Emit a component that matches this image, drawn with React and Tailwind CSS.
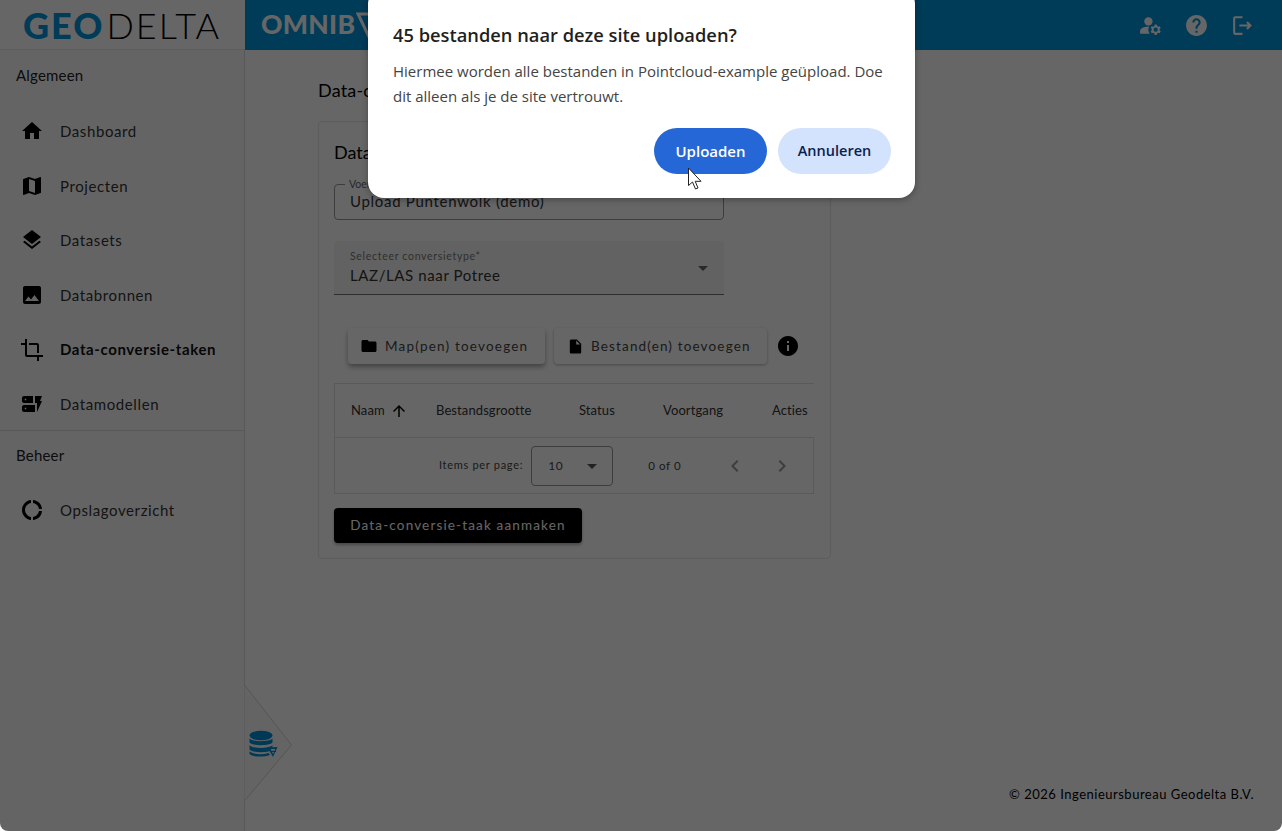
import React from "react";
import { MdHome, MdMap, MdLayers, MdImage, MdCrop, MdDynamicForm, MdDonutLarge, MdFolder, MdInsertDriveFile, MdInfo, MdArrowUpward, MdHelp, MdArrowDropDown, MdChevronLeft, MdChevronRight, MdManageAccounts, MdOutlineLogout } from "react-icons/md";

const nav = [
  ["Dashboard", MdHome],
  ["Projecten", MdMap],
  ["Datasets", MdLayers],
  ["Databronnen", MdImage],
  ["Data-conversie-taken", MdCrop, true],
  ["Datamodellen", MdDynamicForm],
];

function NavItem({ label, Icon, active }) {
  return (
    <div className="flex h-[54.6px] items-center pl-[20px]">
      <Icon className="w-[24px] h-[24px] text-black shrink-0" />
      <span className={`ml-[16px] text-[15px] tracking-[0.6px] ${active ? "font-bold text-[#111]" : "text-[#333]"}`}>{label}</span>
    </div>
  );
}

export default function App() {
  return (
    <div className="relative w-[1282px] h-[831px] overflow-hidden rounded-b-[8px] bg-white text-[#222] flex flex-col font-['Lato',sans-serif]">
      <header className="flex h-[50px] shrink-0">
        <div className="w-[245px] shrink-0 bg-white flex items-center pl-[23px] border-b border-[#e6e6e6] overflow-hidden">
          <span className="text-[36px] leading-none tracking-[2px] font-black text-[#0095dd]">GEO</span>
          <span className="ml-[2px] text-[36px] leading-none tracking-[2px] font-light text-black">DELTA</span>
        </div>
        <div className="flex-1 bg-[#0095dd] flex items-center pl-[16px] pr-[27px]">
          <span className="text-[26.5px] font-black tracking-[0.3px] text-white">OMNIB</span>
          <svg className="ml-[1px] mt-[-1px]" width="26" height="28" viewBox="0 0 26 28" fill="none">
            <path d="M2 3 H24 L13 26 Z" stroke="#fff" strokeWidth="3" strokeLinejoin="miter" />
          </svg>
          <div className="ml-auto flex items-center gap-[21px] text-white">
            <MdManageAccounts className="w-[25px] h-[25px]" />
            <MdHelp className="w-[25px] h-[25px]" />
            <MdOutlineLogout className="w-[25px] h-[25px]" />
          </div>
        </div>
      </header>

      <div className="flex flex-1 min-h-0">
        <aside className="relative w-[245px] shrink-0 bg-[#fbfbfb] border-r border-[#dcdcdc] flex flex-col">
          <div className="pl-[16px] pt-[14px] h-[54px] text-[15px] text-[#222] tracking-[0.2px]">Algemeen</div>
          {nav.map(([l, I, a]) => <NavItem key={l} label={l} Icon={I} active={a} />)}
          <div className="border-t border-[#dcdcdc] pl-[16px] pt-[13px] h-[53px] text-[15px] mt-[-2px] tracking-[0.2px]">Beheer</div>
          <NavItem label="Opslagoverzicht" Icon={MdDonutLarge} />
          <div className="absolute left-[244px] top-[635px] w-[50px] h-[118px]">
            <svg width="50" height="118" viewBox="0 0 50 118" fill="none">
              <path d="M0.5 0 L47.5 60 L0.5 116" stroke="#d4d4d4" strokeWidth="1" fill="#fbfbfb" />
            </svg>
          </div>
          <svg className="absolute left-[249px] top-[680px]" width="30" height="28" viewBox="0 0 30 28" fill="#008fd8">
            <ellipse cx="12" cy="5.5" rx="11.5" ry="4.8" />
            <path d="M0.5 8.5 C3 12 21 12 23.5 8.5 V12.5 C21 16 3 16 0.5 12.5 Z" />
            <path d="M0.5 15 C3 18.8 19 18.8 23.5 15.5 V17 L21 21 C15 23 3 22.5 0.5 19.5 Z" />
            <path d="M0.5 21.5 C5 24.5 13 25 19.5 23 L21 25 C14 27.5 3 27 0.5 24 Z" />
            <path d="M18.5 17.5 L28.5 17 L24 27 Z M21.3 19 L24.2 24 L26.3 19 Z" fillRule="evenodd" />
            <rect x="21" y="20.8" width="6" height="1.2" />
          </svg>
        </aside>

        <main className="flex-1 min-w-0 flex flex-col pl-[73px]">
          <h1 className="mt-[27px] h-[44px] text-[18px] text-black tracking-[0.2px] font-normal">Data-conversie-taken</h1>
          <section className="w-[513px] h-[438px] bg-white border border-[#e6e6e6] rounded-[4px] px-[15px] pt-[18px] shrink-0">
            <h2 className="text-[18px] leading-[24px] text-black">Data-conversie-taak</h2>

            <div className="relative mt-[20px] w-[390px] h-[36px] border border-[#9a9a9a] rounded-[4px] pl-[15px] flex items-end pb-[9px]">
              <span className="absolute left-[10px] top-[-6px] bg-white px-[4px] text-[10.5px] leading-none text-[#666]">Voer een naam in*</span>
              <span className="text-[15px] leading-[18px] tracking-[0.7px] text-[#333]">Upload Puntenwolk (demo)</span>
            </div>

            <div className="mt-[21px] w-[390px] h-[54px] bg-[#f5f5f5] border-b border-[#707070] rounded-t-[4px] pl-[16px] pr-[9px] flex items-center">
              <div className="flex-1">
                <div className="text-[10.5px] leading-[12px] tracking-[0.7px] text-[#777]">Selecteer conversietype*</div>
                <div className="text-[15px] leading-[20px] mt-[3px] tracking-[0.6px] text-[#333]">LAZ/LAS naar Potree</div>
              </div>
              <MdArrowDropDown className="w-[24px] h-[24px] text-[#666]" />
            </div>

            <div className="mt-[33px] ml-[14px] flex items-center">
              <button className="w-[197px] h-[36px] flex items-center pl-[12px] bg-white rounded-[4px] shadow-[0_3px_5px_rgba(0,0,0,0.35)] text-[13.5px] tracking-[1.2px] text-[#444]">
                <MdFolder className="w-[18px] h-[18px] text-black" />
                <span className="ml-[7px]">Map(pen) toevoegen</span>
              </button>
              <button className="ml-[9px] w-[213px] h-[36px] flex items-center pl-[13px] bg-white rounded-[4px] shadow-[0_1px_3px_rgba(0,0,0,0.3)] text-[13.5px] tracking-[1.15px] text-[#444]">
                <MdInsertDriveFile className="w-[17px] h-[17px] text-black" />
                <span className="ml-[7px]">Bestand(en) toevoegen</span>
              </button>
              <MdInfo className="ml-[9px] mt-[-1px] w-[24px] h-[24px] text-black" />
            </div>

            <div className="mt-[19px] w-[480px] border-t border-l border-[#e0e0e0]">
              <div className="h-[54px] flex items-center text-[13px] text-[#333] border-b border-[#e0e0e0] tracking-[0.1px]">
                <div className="w-[101px] pl-[16px] flex items-center">Naam<MdArrowUpward className="ml-[5px] w-[18px] h-[18px] text-black" /></div>
                <div className="w-[143px]">Bestandsgrootte</div>
                <div className="w-[84px]">Status</div>
                <div className="w-[109px]">Voortgang</div>
                <div>Acties</div>
              </div>
              <div className="h-[56px] flex items-center border-b border-r border-[#e0e0e0] text-[11px] text-[#444] tracking-[0.7px]">
                <span className="ml-[104px]">Items per page:</span>
                <div className="ml-[8px] w-[82px] h-[40px] border border-[#999] rounded-[4px] flex items-center pl-[16px] pr-[8px] text-[12px]">
                  <span>10</span>
                  <MdArrowDropDown className="ml-auto w-[24px] h-[24px] text-[#555]" />
                </div>
                <span className="ml-[35px] text-[11.5px] tracking-[0.6px]">0 of 0</span>
                <MdChevronLeft className="ml-[42px] w-[24px] h-[24px] text-[#999]" />
                <MdChevronRight className="ml-[23px] w-[24px] h-[24px] text-[#999]" />
              </div>
            </div>

            <button className="mt-[14px] block w-[248px] h-[35px] bg-black rounded-[4px] shadow-[0_2px_3px_rgba(0,0,0,0.3)] text-white text-[13.5px] tracking-[1.15px] text-center">Data-conversie-taak aanmaken</button>
          </section>
          <footer className="mt-auto mb-[27px] mr-[28px] text-right text-[13px] text-black tracking-[0.5px]">© 2026 Ingenieursbureau Geodelta B.V.</footer>
        </main>
      </div>

      <div className="absolute inset-0 bg-black/60" />

      <div className="absolute left-[368px] top-[-12px] w-[547px] h-[210px] bg-white rounded-[16px] shadow-[0_2px_6px_rgba(0,0,0,0.3)] pl-[25px] pr-[24px] pt-[35px] font-['Open_Sans',sans-serif]">
        <h3 className="text-[18.3px] leading-[24px] font-semibold text-[#1f1f1f]">45 bestanden naar deze site uploaden?</h3>
        <p className="mt-[12px] text-[15px] leading-[25px] text-[#444]">Hiermee worden alle bestanden in Pointcloud-example geüpload. Doe dit alleen als je de site vertrouwt.</p>
        <div className="mt-[19px] flex justify-end gap-[11px]">
          <button className="w-[113px] h-[46px] rounded-full bg-[#2567d6] text-white text-[15px] font-semibold">Uploaden</button>
          <button className="w-[113px] h-[46px] rounded-full bg-[#d3e3fd] text-[#0a2050] text-[14.5px] font-semibold">Annuleren</button>
        </div>
      </div>

      <svg className="absolute left-[687px] top-[167px]" width="17" height="24" viewBox="0 0 17 24">
        <path d="M1.5 1 V18.5 L5.5 15 L8.5 22 L11 21 L8.2 14.3 H14 Z" fill="#fff" stroke="#222" strokeWidth="1" />
      </svg>
    </div>
  );
}
